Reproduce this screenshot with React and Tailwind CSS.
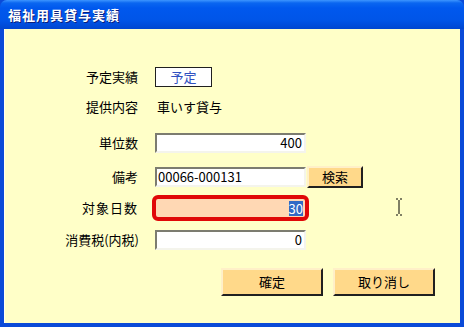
export default function App() {
  const font = { fontFamily: '"MS UI Gothic","Noto Sans CJK JP","Liberation Sans",sans-serif' };
  const inset =
    "border-2 border-t-[#7c7c70] border-l-[#7c7c70] border-b-[#f4f4ec] border-r-[#f4f4ec] bg-white";
  const btn =
    "bg-[#ffd98a] border-2 border-t-[#fff0c8] border-l-[#fff0c8] border-b-[#202020] border-r-[#202020] flex items-center justify-center text-[13px] text-black";
  return (
    <div className="w-[464px] h-[327px] flex flex-col bg-[#0a4ad8] overflow-hidden" style={font}>
      <div className="h-[29px] shrink-0 flex items-center pl-[8px] rounded-t-[7px] bg-[linear-gradient(to_bottom,#3d95ff_0px,#0a66f0_3px,#0058ee_8px,#0055e8_20px,#0046d0_29px)]">
        <span className="text-white font-bold text-[13px] tracking-[1px] [text-shadow:1px_1px_0_#0a1e7a]">
          福祉用具貸与実績
        </span>
      </div>
      <div className="flex-1 mx-[4px] mb-[4px] bg-[#ffffc8] border-l border-[#fffff0] flex flex-col text-[13px] text-black">
        {/* row 1 */}
        <div className="flex items-center mt-[38px] h-[20px]">
          <div className="w-[133px] text-right">予定実績</div>
          <div className="ml-[17px] w-[57px] h-[20px] border border-[#202020] bg-white flex items-center justify-center text-[#3050c0]">
            予定
          </div>
        </div>
        {/* row 2 */}
        <div className="flex items-center mt-[10px] h-[20px]">
          <div className="w-[133px] text-right">提供内容</div>
          <div className="ml-[19px]">車いす貸与</div>
        </div>
        {/* row 3 */}
        <div className="flex items-center mt-[16px] h-[20px]">
          <div className="w-[133px] text-right">単位数</div>
          <div className={`ml-[17px] w-[151px] h-[20px] ${inset} flex items-center justify-end pr-[2px]`}>400</div>
        </div>
        {/* row 4 */}
        <div className="flex items-center mt-[13px] h-[22px]">
          <div className="w-[133px] text-right">備考</div>
          <div className={`ml-[17px] w-[151px] h-[20px] ${inset} flex items-center pl-[1px]`}>00066-000131</div>
          <div className={`ml-[1px] w-[56px] h-[22px] ${btn}`}>検索</div>
        </div>
        {/* row 5 */}
        <div className="flex items-center mt-[7px] h-[26px] relative">
          <div className="w-[133px] text-right tracking-[1px]">対象日数</div>
          <div className="ml-[14px] w-[157px] h-[26px] border-[4px] border-[#e00808] rounded-[6px] bg-[#ffd8b4] flex items-center justify-end pr-[2px]">
            <span className="bg-[#316ac5] text-white leading-[15px]">30</span>
          </div>
          <svg className="absolute left-[389px] top-[3px]" width="10" height="18" viewBox="0 0 10 18">
            <path d="M2 1h2M6 1h2M5 2v14M2 17h2M6 17h2" stroke="#000" strokeWidth="1" fill="none" />
          </svg>
        </div>
        {/* row 6 */}
        <div className="flex items-center mt-[9px] h-[20px]">
          <div className="w-[134px] text-right">消費税(内税)</div>
          <div className={`ml-[16px] w-[151px] h-[20px] ${inset} flex items-center justify-end pr-[2px]`}>0</div>
        </div>
        {/* buttons */}
        <div className="flex mt-[18px] ml-[216px] gap-[10px]">
          <div className={`w-[102px] h-[28px] ${btn}`}>確定</div>
          <div className={`w-[102px] h-[28px] ${btn}`}>取り消し</div>
        </div>
      </div>
    </div>
  );
}
